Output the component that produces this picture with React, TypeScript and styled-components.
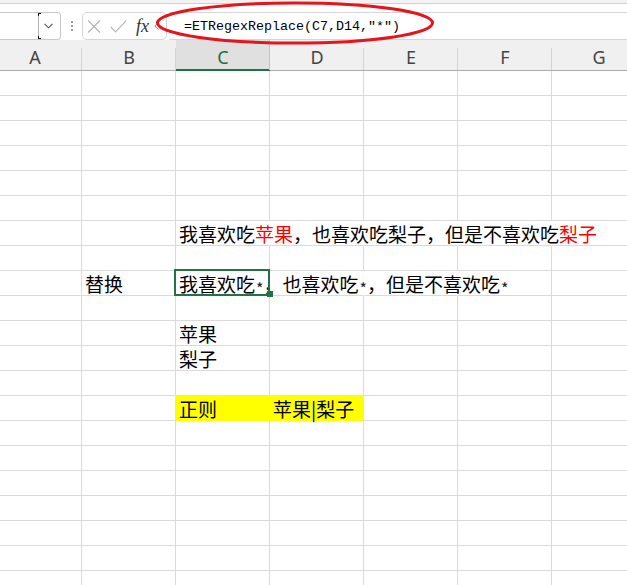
import React from 'react';
import styled, { createGlobalStyle, css } from 'styled-components';

const GlobalStyle = createGlobalStyle`
  html, body { margin: 0; padding: 0; background: #fff; }
  body { overflow: hidden; }
`;

const Page = styled.div`
  position: relative;
  width: 627px;
  height: 585px;
  overflow: hidden;
  background: #fff;
  font-family: "Noto Sans CJK SC", "Noto Sans", sans-serif;
`;

const TopStrip = styled.div`
  height: 3px;
  background: #f3f3f3;
  border-bottom: 1px solid #d0d0d0;
`;

const FormulaRow = styled.div`
  height: 36px;
  display: flex;
  align-items: flex-end;
  background: #fff;
`;

const NameBox = styled.div`
  box-sizing: border-box;
  width: 61px;
  height: 28px;
  border: 1px solid #c8c8c8;
  border-left: none;
  border-radius: 0 4px 4px 0;
  display: flex;
  align-items: center;
  justify-content: flex-end;
  gap: 2px;
  padding-right: 7px;
  background: #fff;
`;

const Grip = styled.div`
  width: 3px;
  height: 28px;
  margin: 0 9px 0 9px;
  display: flex;
  flex-direction: column;
  justify-content: center;
  align-items: center;
  gap: 2px;
`;

const GripDot = styled.span`
  width: 2px;
  height: 2px;
  background: #9a9a9a;
`;

const FuncBox = styled.div`
  box-sizing: border-box;
  width: 85px;
  height: 28px;
  border: 1px solid #d6d6d6;
  border-radius: 5px;
  display: flex;
  align-items: center;
  padding-left: 4px;
  background: #fff;
`;

const IconSlot = styled.span<{ $ml?: number }>`
  display: inline-flex;
  margin-left: ${p => p.$ml ?? 0}px;
`;

const Fx = styled.span`
  margin-left: 9px;
  font-family: "Liberation Serif", "DejaVu Serif", serif;
  font-style: italic;
  font-size: 18px;
  line-height: 20px;
  color: #333;
`;

const FormulaInput = styled.div`
  box-sizing: border-box;
  flex: 1;
  height: 28px;
  margin-left: 2px;
  border-top: 1px solid #d6d6d6;
  border-bottom: 1px solid #d6d6d6;
  padding-left: 15px;
  display: flex;
  align-items: center;
  font-family: "Liberation Mono", "DejaVu Sans Mono", monospace;
  font-size: 13.33px;
  color: #000;
  background: #fff;
  white-space: nowrap;
`;

const Sheet = styled.div`
  margin-left: -12px;
  display: grid;
  grid-template-columns: repeat(7, 94px);
`;

const HeaderCell = styled.div<{ $active?: boolean }>`
  position: relative;
  box-sizing: border-box;
  height: 31px;
  padding-top: 4px;
  line-height: 26px;
  text-align: center;
  font-family: "Noto Sans", "Open Sans", sans-serif;
  font-size: 18px;
  color: ${p => (p.$active ? '#1f6b45' : '#444')};
  background: ${p => (p.$active ? '#e0e0e0' : '#f0f0f0')};
  box-shadow: inset 0 ${p => (p.$active ? -2 : -1)}px 0 ${p => (p.$active ? '#217346' : '#ababab')};
  &::after {
    content: '';
    position: absolute;
    right: 0;
    top: ${p => (p.$active ? 0 : 8)}px;
    bottom: 1px;
    width: 1px;
    background: ${p => (p.$active ? '#c4c4c4' : '#d4d4d4')};
  }
`;

const Cell = styled.div<{ $noRight?: boolean; $fill?: string; $selected?: boolean }>`
  box-sizing: border-box;
  height: 25px;
  padding: 0 0 0 3px;
  border-right: 1px solid ${p => (p.$noRight ? 'transparent' : '#dadada')};
  border-bottom: 1px solid #dadada;
  background: transparent;
  white-space: nowrap;
  font-size: 19px;
  line-height: 25px;
  color: #000;
  ${p =>
    p.$fill &&
    css`
      background: ${p.$fill};
      border-color: ${p.$fill};
      box-shadow: -1px -1px 0 0 ${p.$fill};
    `}
  ${p =>
    p.$selected &&
    css`
      position: relative;
    `}
`;

const Red = styled.span`
  color: #ff0000;
`;

const Star = styled.span`
  font-size: 16px;
  line-height: 16px;
  vertical-align: -3px;
  color: #222;
  padding-left: 1px;
`;

const Selection = styled.div`
  position: absolute;
  left: -2px;
  top: -2px;
  right: -1px;
  bottom: -1px;
  border: 2px solid #217346;
  z-index: 3;
  pointer-events: none;
`;

const FillHandle = styled.div`
  position: absolute;
  right: -4px;
  bottom: -2px;
  width: 6px;
  height: 6px;
  background: #217346;
  z-index: 4;
`;

const Annotation = styled.svg`
  position: absolute;
  left: 0;
  top: 0;
  z-index: 10;
  pointer-events: none;
`;

type CellDef = {
  content?: React.ReactNode;
  noRight?: boolean;
  fill?: string;
  selected?: boolean;
};

const COLS = ['A', 'B', 'C', 'D', 'E', 'F', 'G'];
const ROW_COUNT = 21;

const data: Record<string, CellDef> = {
  C7: {
    content: (
      <>
        我喜欢吃<Red>苹果</Red>，也喜欢吃梨子，但是不喜欢吃<Red>梨子</Red>
      </>
    ),
    noRight: true,
  },
  D7: { noRight: true },
  E7: { noRight: true },
  F7: { noRight: true },
  B9: { content: '替换' },
  C9: {
    content: (
      <>
        我喜欢吃<Star>*</Star>，也喜欢吃<Star>*</Star>，但是不喜欢吃<Star>*</Star>
      </>
    ),
    selected: true,
    noRight: true,
  },
  D9: { noRight: true },
  E9: { noRight: true },
  C11: { content: '苹果' },
  C12: { content: '梨子' },
  C14: { content: '正则', fill: '#ffff00' },
  D14: { content: '苹果|梨子', fill: '#ffff00' },
};

const Chevron = () => (
  <svg width="9" height="6" viewBox="0 0 9 6">
    <path d="M0.5 0.8 L4.5 4.8 L8.5 0.8" fill="none" stroke="#555" strokeWidth="1.1" />
  </svg>
);

const IBeam = () => (
  <svg width="4" height="26" viewBox="0 0 4 26">
    <path d="M0.5 0 V26" stroke="#b0b0b0" strokeWidth="1" />
    <path d="M0 0.5 H3 M0 25.5 H3" stroke="#111" strokeWidth="1" />
    <path d="M0.5 0 V3 M0.5 23 V26" stroke="#111" strokeWidth="1" />
  </svg>
);

const CrossIcon = () => (
  <svg width="14" height="13" viewBox="0 0 14 13">
    <path d="M1 0.5 L13 12.5 M13 0.5 L1 12.5" stroke="#b4b4b4" strokeWidth="1.1" fill="none" />
  </svg>
);

const CheckIcon = () => (
  <svg width="17" height="13" viewBox="0 0 17 13">
    <path d="M0.8 7 L5.5 12 L16.2 0.6" stroke="#b4b4b4" strokeWidth="1.1" fill="none" />
  </svg>
);

const SmallChevron = () => (
  <svg width="5" height="8" viewBox="0 0 5 8">
    <path d="M4.5 0.5 L0.8 4 L4.5 7.5" stroke="#8a8a8a" strokeWidth="1" fill="none" />
  </svg>
);

export default function App() {
  const rows = Array.from({ length: ROW_COUNT }, (_, i) => i + 1);
  return (
    <>
      <GlobalStyle />
      <Page>
        <TopStrip />
        <FormulaRow>
          <NameBox>
            <IBeam />
            <Chevron />
          </NameBox>
          <Grip>
            <GripDot />
            <GripDot />
            <GripDot />
          </Grip>
          <FuncBox>
            <IconSlot>
              <CrossIcon />
            </IconSlot>
            <IconSlot $ml={9}>
              <CheckIcon />
            </IconSlot>
            <Fx>fx</Fx>
            <IconSlot $ml={5}>
              <SmallChevron />
            </IconSlot>
          </FuncBox>
          <FormulaInput>=ETRegexReplace(C7,D14,"*")</FormulaInput>
        </FormulaRow>
        <Sheet>
          {COLS.map(c => (
            <HeaderCell key={c} $active={c === 'C'}>
              {c}
            </HeaderCell>
          ))}
          {rows.map(r =>
            COLS.map(c => {
              const def = data[`${c}${r}`] ?? {};
              return (
                <Cell
                  key={`${c}${r}`}
                  $noRight={def.noRight}
                  $fill={def.fill}
                  $selected={def.selected}
                >
                  {def.content}
                  {def.selected && (
                    <>
                      <Selection />
                      <FillHandle />
                    </>
                  )}
                </Cell>
              );
            })
          )}
        </Sheet>
        <Annotation width="627" height="60" viewBox="0 0 627 60">
          <ellipse cx="295" cy="23" rx="137.5" ry="20" fill="none" stroke="#e4151b" strokeWidth="3" />
        </Annotation>
      </Page>
    </>
  );
}
